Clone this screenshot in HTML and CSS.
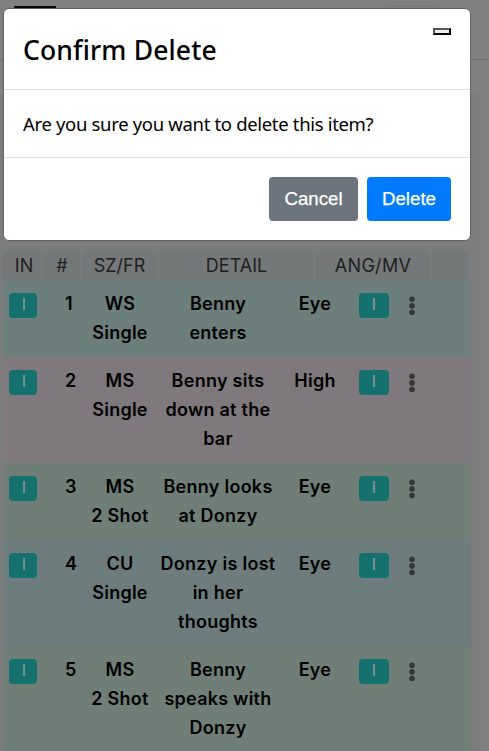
FILE: index.html
```html
<!DOCTYPE html>
<html lang="en">
<head>
<meta charset="utf-8">
<title>Confirm Delete</title>
<link rel="stylesheet" href="styles.css">
</head>
<body>
<header class="topbar"><span class="logo"></span><span class="pill"></span></header>
<main class="sheet">
  <div class="table">
    <div class="head"><span>IN</span><span>#</span><span>SZ/FR</span><span>DETAIL</span><span>ANG/MV</span><span></span></div>
    <div class="row aqua"><i class="badge">I</i><b class="num">1</b><b class="size">WS<br>Single</b><b class="detail">Benny<br>enters</b><b class="angle">Eye</b><i class="badge wide">I</i><svg class="dots" viewBox="0 0 6 20"><circle cx="3" cy="3.3" r="2.8"/><circle cx="3" cy="9.9" r="2.8"/><circle cx="3" cy="16.5" r="2.8"/></svg></div>
    <div class="row mauve tall"><i class="badge">I</i><b class="num">2</b><b class="size">MS<br>Single</b><b class="detail">Benny sits<br>down at the<br>bar</b><b class="angle">High</b><i class="badge wide">I</i><svg class="dots" viewBox="0 0 6 20"><circle cx="3" cy="3.3" r="2.8"/><circle cx="3" cy="9.9" r="2.8"/><circle cx="3" cy="16.5" r="2.8"/></svg></div>
    <div class="row green"><i class="badge">I</i><b class="num">3</b><b class="size">MS<br>2 Shot</b><b class="detail">Benny looks<br>at Donzy</b><b class="angle">Eye</b><i class="badge wide">I</i><svg class="dots" viewBox="0 0 6 20"><circle cx="3" cy="3.3" r="2.8"/><circle cx="3" cy="9.9" r="2.8"/><circle cx="3" cy="16.5" r="2.8"/></svg></div>
    <div class="row blue tall"><i class="badge">I</i><b class="num">4</b><b class="size">CU<br>Single</b><b class="detail">Donzy is lost<br>in her<br>thoughts</b><b class="angle">Eye</b><i class="badge wide">I</i><svg class="dots" viewBox="0 0 6 20"><circle cx="3" cy="3.3" r="2.8"/><circle cx="3" cy="9.9" r="2.8"/><circle cx="3" cy="16.5" r="2.8"/></svg></div>
    <div class="row green tall"><i class="badge">I</i><b class="num">5</b><b class="size">MS<br>2 Shot</b><b class="detail">Benny<br>speaks with<br>Donzy</b><b class="angle">Eye</b><i class="badge wide">I</i><svg class="dots" viewBox="0 0 6 20"><circle cx="3" cy="3.3" r="2.8"/><circle cx="3" cy="9.9" r="2.8"/><circle cx="3" cy="16.5" r="2.8"/></svg></div>
  </div>
</main>
<div class="modal">
  <div class="modal-header"><h1>Confirm Delete</h1><button class="close" aria-label="Close"></button></div>
  <p class="modal-body">Are you sure you want to delete this item?</p>
  <div class="modal-footer"><button class="btn cancel">Cancel</button><button class="btn delete">Delete</button></div>
</div>
</body>
</html>
```
FILE: styles.css
```css
* { box-sizing: border-box; }
body { margin: 0; height: 751px; overflow: hidden; background: #808080; font-family: Inter, sans-serif; }
.topbar { height: 60px; padding: 6px 46px 0 14px; display: flex; justify-content: space-between; border-bottom: 1px solid #6c6c6c; }
.logo { width: 42px; height: 34px; background: #04090d; }
.pill { width: 64px; height: 34px; border: 1px solid #777; border-radius: 6px; }
.sheet { margin-top: 34px; width: 481px; height: 657px; padding: 157px 10px 0 3px; background: #7c7c7c; }
.head { display: grid; grid-template-columns: 39px 39px 78px 156px 117px 38px; width: 467px; height: 29px; }
.head span { background: #747879; border-right: 1px solid #7c7f80; text-align: center; font-size: 18px; line-height: 29px; color: #202020; padding-left: 4px; }
.head span:nth-child(2) { padding-left: 2px; }
.head span:nth-child(3), .head span:nth-child(4) { padding-left: 0; }
.head span:nth-child(5) { padding-left: 0; letter-spacing: .3px; }
.row { display: flex; align-items: flex-start; height: 77px; padding: 9px 0 0 6px; }
.tall { height: 106px; }
.row b { font-size: 18px; font-weight: 600; line-height: 29.2px; text-align: center; white-space: nowrap; color: #000; }
.row .num { width: 12px; margin-left: 28px; text-align: left; }
.row .size { width: 66px; margin-left: 10px; letter-spacing: .25px; }
.row .detail { width: 124px; margin-left: 3px; letter-spacing: .27px; }
.row .angle { width: 60px; margin-left: 5px; letter-spacing: .25px; }
.badge { width: 28px; height: 25px; margin-top: 4px; border-radius: 4px; background: #15716d; color: #8c9c98; font: 16px/22px Inter, sans-serif; text-align: center; padding-left: 2px; }
.wide { width: 30px; margin-left: 14px; padding-left: 0; }
.dots { width: 6px; height: 20px; margin: 7px 0 0 20px; fill: #373638; }
.aqua { background: #6d7f7c; }
.mauve { background: #7f787c; }
.green { background: #6f7f77; }
.blue { background: #6d7d7e; }
.modal { position: absolute; left: 3px; top: 8px; width: 468px; height: 233px; border: 1px solid #626262; border-radius: 6px; background: #fff; font-family: "Noto Sans", sans-serif; color: #000; }
.modal-header { height: 81px; padding: 19px 19px 0; display: flex; justify-content: space-between; border-bottom: 1px solid #dee2e6; }
h1 { margin: 0; font-size: 26.5px; line-height: 45px; font-weight: 500; letter-spacing: .15px; }
.close { width: 18px; height: 7px; padding: 0; background: #efefef; border: 2px outset #000; }
.modal-body { margin: 0; height: 68px; padding: 18px 19px; font-size: 18.5px; line-height: 31px; letter-spacing: -.33px; border-bottom: 1px solid #dee2e6; white-space: nowrap; }
.modal-footer { padding: 19px 19px 0; display: flex; justify-content: flex-end; gap: 9px; }
.btn { height: 44px; border: 0; border-radius: 4px; padding: 0; color: #fff; font: 18.7px "Liberation Sans", sans-serif; -webkit-text-stroke: .25px #fff; }
.cancel { width: 89px; background: #6c757d; }
.delete { width: 84px; background: #007bff; }
```
